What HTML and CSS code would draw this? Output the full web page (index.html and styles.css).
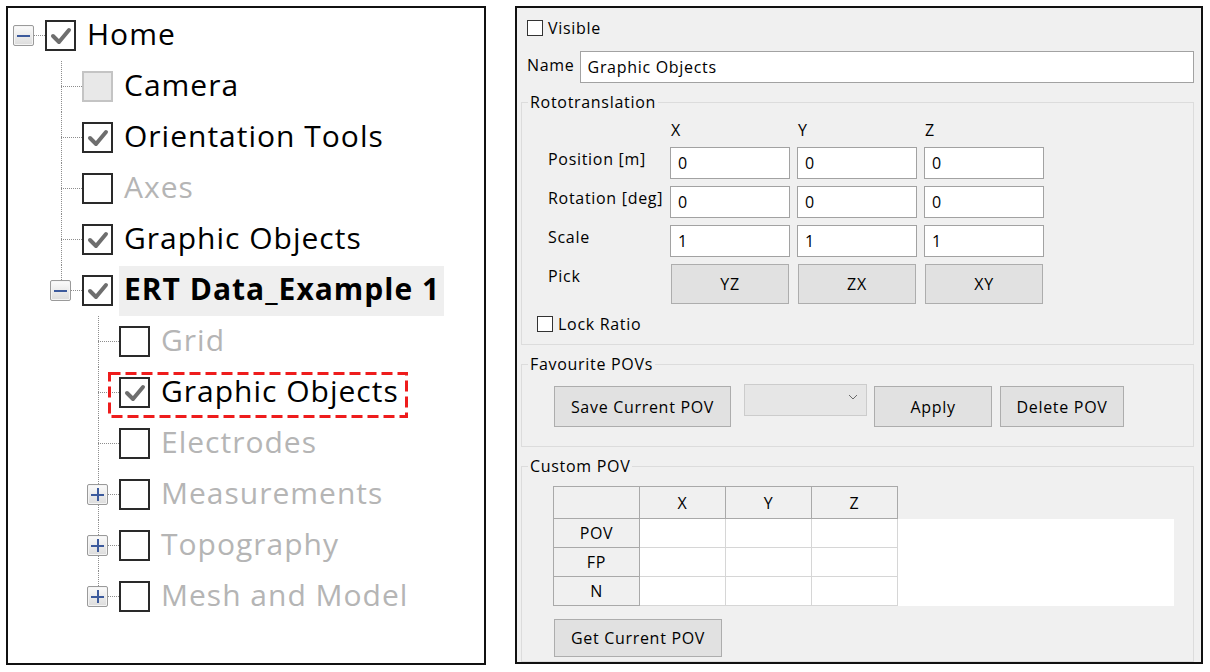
FILE: index.html
```html
<!DOCTYPE html>
<html>
<head>
<meta charset="utf-8">
<link rel="stylesheet" href="styles.css">
</head>
<body>
<div class="page">
  <div class="tree-panel">
    <div class="tree">
      <div class="row">
        <span class="cell root-h"><span class="exp"><span class="h"></span></span></span>
        <span class="cb"><svg viewBox="0 0 26 26"><polyline points="5,13 11,19 21,7"/></svg></span>
        <span class="lbl">Home</span>
      </div>
      <div class="row">
        <span class="cell"></span>
        <span class="cell conn-t"></span>
        <span class="cb dis"></span>
        <span class="lbl">Camera</span>
      </div>
      <div class="row">
        <span class="cell"></span>
        <span class="cell conn-t"></span>
        <span class="cb"><svg viewBox="0 0 26 26"><polyline points="5,13 11,19 21,7"/></svg></span>
        <span class="lbl">Orientation Tools</span>
      </div>
      <div class="row">
        <span class="cell"></span>
        <span class="cell conn-t"></span>
        <span class="cb"></span>
        <span class="lbl dim">Axes</span>
      </div>
      <div class="row">
        <span class="cell"></span>
        <span class="cell conn-t"></span>
        <span class="cb"><svg viewBox="0 0 26 26"><polyline points="5,13 11,19 21,7"/></svg></span>
        <span class="lbl">Graphic Objects</span>
      </div>
      <div class="row">
        <span class="cell"></span>
        <span class="cell conn-l"><span class="exp"><span class="h"></span></span></span>
        <span class="cb"><svg viewBox="0 0 26 26"><polyline points="5,13 11,19 21,7"/></svg></span>
        <span class="lbl sel">ERT Data_Example 1</span>
      </div>
      <div class="row">
        <span class="cell"></span>
        <span class="cell"></span>
        <span class="cell conn-t"></span>
        <span class="cb"></span>
        <span class="lbl dim">Grid</span>
      </div>
      <div class="row marked">
        <span class="cell"></span>
        <span class="cell"></span>
        <span class="cell conn-t"></span>
        <span class="cb"><svg viewBox="0 0 26 26"><polyline points="5,13 11,19 21,7"/></svg></span>
        <span class="lbl">Graphic Objects</span>
        <svg class="mark" width="300" height="46" viewBox="0 0 300 46"><rect x="1.5" y="1.5" width="297" height="43" fill="none" stroke="#ee1c1c" stroke-width="3" stroke-dasharray="11 5"/></svg>
      </div>
      <div class="row">
        <span class="cell"></span>
        <span class="cell"></span>
        <span class="cell conn-t"></span>
        <span class="cb"></span>
        <span class="lbl dim">Electrodes</span>
      </div>
      <div class="row">
        <span class="cell"></span>
        <span class="cell"></span>
        <span class="cell conn-t"><span class="exp"><span class="h"></span><span class="v"></span></span></span>
        <span class="cb"></span>
        <span class="lbl dim">Measurements</span>
      </div>
      <div class="row">
        <span class="cell"></span>
        <span class="cell"></span>
        <span class="cell conn-t"><span class="exp"><span class="h"></span><span class="v"></span></span></span>
        <span class="cb"></span>
        <span class="lbl dim">Topography</span>
      </div>
      <div class="row">
        <span class="cell"></span>
        <span class="cell"></span>
        <span class="cell conn-l"><span class="exp"><span class="h"></span><span class="v"></span></span></span>
        <span class="cb"></span>
        <span class="lbl dim">Mesh and Model</span>
      </div>
    </div>
  </div>

  <div class="props">
    <div class="check-row vis"><span class="sbox"></span><span>Visible</span></div>
    <div class="name-row"><span class="name-lbl">Name</span><div class="field wide">Graphic Objects</div></div>

    <fieldset class="group roto">
      <legend>Rototranslation</legend>
      <div class="roto-grid">
        <span></span><span class="hdr">X</span><span class="hdr">Y</span><span class="hdr">Z</span>
        <span class="rlabel">Position [m]</span><div class="field">0</div><div class="field">0</div><div class="field">0</div>
        <span class="rlabel">Rotation [deg]</span><div class="field">0</div><div class="field">0</div><div class="field">0</div>
        <span class="rlabel">Scale</span><div class="field">1</div><div class="field">1</div><div class="field">1</div>
        <span class="rlabel">Pick</span><div class="btn pick">YZ</div><div class="btn pick">ZX</div><div class="btn pick">XY</div>
      </div>
      <div class="check-row lock"><span class="sbox"></span><span>Lock Ratio</span></div>
    </fieldset>

    <fieldset class="group fav">
      <legend>Favourite POVs</legend>
      <div class="fav-row">
        <div class="btn save">Save Current POV</div>
        <div class="combo"><svg width="10" height="6" viewBox="0 0 10 6"><polyline points="1,1 5,5 9,1" fill="none" stroke="#6a6a6a" stroke-width="1"/></svg></div>
        <div class="btn apply">Apply</div>
        <div class="btn del">Delete POV</div>
      </div>
    </fieldset>

    <fieldset class="group custom">
      <legend>Custom POV</legend>
      <div class="pov-table">
        <div class="th corner"></div><div class="th">X</div><div class="th">Y</div><div class="th">Z</div><div class="blank"></div>
        <div class="th rh">POV</div><div class="td"></div><div class="td"></div><div class="td"></div><div class="fill"></div>
        <div class="th rh">FP</div><div class="td"></div><div class="td"></div><div class="td"></div><div class="fill"></div>
        <div class="th rh last">N</div><div class="td"></div><div class="td"></div><div class="td"></div><div class="fill"></div>
      </div>
      <div class="btn get">Get Current POV</div>
    </fieldset>
  </div>
</div>
</body>
</html>
```

FILE: styles.css
```css
* { box-sizing: border-box; }
html, body { margin: 0; padding: 0; background: #fff; }
.page {
  display: flex;
  gap: 29px;
  padding: 6px;
  width: 1210px;
  height: 672px;
}

/* ---------- tree ---------- */
.tree-panel {
  width: 480px;
  height: 659px;
  border: 2px solid #111;
  background: #fff;
  flex: none;
}
.tree {
  padding-top: 2px;
  font-family: "Open Sans", "Noto Sans", sans-serif;
  font-size: 30px;
  letter-spacing: 1px;
}
.row {
  height: 51px;
  display: flex;
  align-items: center;
  position: relative;
}
.cell {
  width: 37px;
  height: 51px;
  flex: none;
  display: flex;
  align-items: center;
}
.root-h {
  background: repeating-linear-gradient(to right, #8d8d8d 0 1px, transparent 1px 2px) 16px 25px / 21px 1px no-repeat;
}
.conn-t {
  background:
    repeating-linear-gradient(to bottom, #8d8d8d 0 1px, transparent 1px 2px) 16px 0 / 1px 100% no-repeat,
    repeating-linear-gradient(to right, #8d8d8d 0 1px, transparent 1px 2px) 16px 25px / 21px 1px no-repeat;
}
.conn-l {
  background:
    repeating-linear-gradient(to bottom, #8d8d8d 0 1px, transparent 1px 2px) 16px 0 / 1px 26px no-repeat,
    repeating-linear-gradient(to right, #8d8d8d 0 1px, transparent 1px 2px) 16px 25px / 21px 1px no-repeat;
}
.exp {
  width: 21px;
  height: 21px;
  margin-left: 5px;
  border: 1px solid #9a9a9a;
  border-radius: 2px;
  background: linear-gradient(#fbfbfb, #dcdcdc);
  box-shadow: inset 0 0 0 1px #f4f4f4;
  display: flex;
  align-items: center;
  justify-content: center;
  position: relative;
}
.exp .h {
  width: 13px;
  height: 2px;
  background: #3c5a9c;
}
.exp .v {
  position: absolute;
  width: 2px;
  height: 13px;
  background: #3c5a9c;
  left: 8.5px;
  top: 3px;
}
.cb {
  width: 31px;
  height: 31px;
  flex: none;
  border: 2px solid #2a2a2a;
  background: #fff;
  display: flex;
  align-items: center;
  justify-content: center;
}
.cb svg { width: 26px; height: 26px; }
.cb polyline {
  fill: none;
  stroke: #6e6e6e;
  stroke-width: 4;
  stroke-linecap: round;
  stroke-linejoin: round;
}
.cb.dis {
  border-color: #c4c4c4;
  background: #e8e8e8;
}
.lbl {
  margin-left: 6px;
  padding: 0 5px 4px 5px;
  height: 50px;
  line-height: 46px;
  color: #000;
  white-space: nowrap;
}
.lbl.dim { color: #b5b5b5; }
.lbl.sel {
  background: #efefef;
  font-weight: 700;
  padding-right: 4px;
}
.mark {
  position: absolute;
  left: 100px;
  top: 5px;
}

/* ---------- properties ---------- */
.props {
  width: 688px;
  height: 658px;
  flex: none;
  border: 2px solid #111;
  background: #f0f0f0;
  padding: 0 7px 0 4px;
  display: flex;
  flex-direction: column;
  font-family: "Open Sans", "Noto Sans", sans-serif;
  font-size: 16px;
  letter-spacing: 0.7px;
  color: #000;
}
.check-row {
  display: flex;
  align-items: center;
  height: 20px;
  gap: 5px;
}
.sbox {
  width: 16px;
  height: 16px;
  border: 1px solid #333;
  background: #fff;
  flex: none;
}
.vis { margin-top: 10px; padding-left: 6px; }
.name-row {
  display: flex;
  align-items: center;
  margin-top: 13px;
  padding-left: 6px;
  gap: 5px;
}
.name-lbl { margin-top: -4px; }
.field {
  height: 32px;
  background: #fff;
  border: 1px solid #a2a2a2;
  padding: 0 7px;
  display: flex;
  align-items: center;
}
.field.wide { flex: 1; }

.group {
  margin: 0;
  border: 1px solid #dcdcdc;
  padding: 0;
  min-width: 0;
}
.group legend {
  margin-left: 6px;
  padding: 0 2px;
  line-height: 20px;
  height: 20px;
}
.roto { margin-top: 9px; padding: 8px 0 10px 0; }
.roto-grid {
  display: grid;
  grid-template-columns: 115px 120px 120px 120px;
  grid-template-rows: 20px 32px 32px 32px 40px;
  column-gap: 7px;
  row-gap: 7px;
  padding-left: 26px;
}
.hdr { padding-left: 1px; line-height: 20px; }
.rlabel { line-height: 24px; white-space: nowrap; }
.btn {
  background: #e1e1e1;
  border: 1px solid #adadad;
  display: flex;
  align-items: center;
  justify-content: center;
  white-space: nowrap;
}
.pick { margin: 0 1px; }
.lock { margin-top: 10px; padding-left: 15px; }

.fav { margin-top: 9px; padding: 10px 0 19px 0; }
.fav-row {
  display: flex;
  align-items: flex-start;
  padding-left: 32px;
  padding-top: 2px;
}
.save { width: 177px; height: 41px; }
.combo {
  width: 123px;
  height: 32px;
  margin-left: 13px;
  margin-top: -2px;
  background: #e6e6e6;
  border: 1px solid #cccccc;
  display: flex;
  align-items: center;
  justify-content: flex-end;
  padding-right: 8px;
  padding-bottom: 6px;
}
.apply { width: 118px; height: 41px; margin-left: 7px; }
.del { width: 124px; height: 41px; margin-left: 8px; }

.custom { margin-top: 9px; padding: 10px 0 4px 0; flex: 1; }
.pov-table {
  display: grid;
  grid-template-columns: 87px 86px 86px 86px 1fr;
  grid-template-rows: 33px 29px 29px 29px;
  margin-left: 31px;
  width: 621px;
}
.th {
  background: #f0f0f0;
  border-right: 1px solid #a9a9a9;
  border-bottom: 1px solid #a9a9a9;
  display: flex;
  align-items: center;
  justify-content: center;
}
.pov-table > .th:nth-child(-n+4) { border-top: 1px solid #a9a9a9; }
.pov-table .rh, .pov-table .corner { border-left: 1px solid #a9a9a9; }
.td {
  background: #fff;
  border-right: 1px solid #d6d6d6;
  border-bottom: 1px solid #d6d6d6;
}
.fill { background: #fff; }
.blank { background: transparent; }
.get {
  width: 168px;
  height: 38px;
  margin-left: 32px;
  margin-top: 13px;
}
```
